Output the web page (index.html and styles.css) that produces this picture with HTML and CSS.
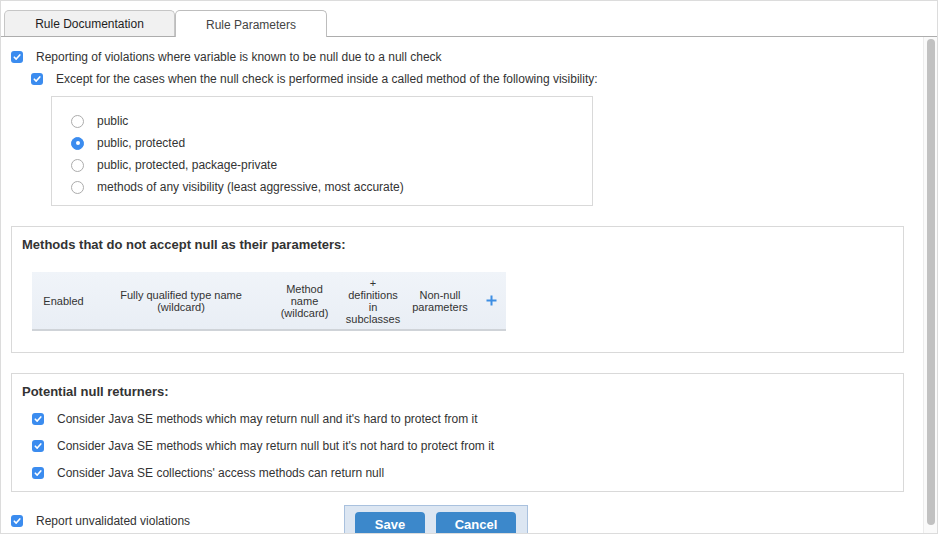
FILE: index.html
```html
<!DOCTYPE html>
<html>
<head>
<meta charset="utf-8">
<link rel="stylesheet" href="styles.css">
</head>
<body>
<div class="frame">
  <div class="tabbar">
    <div class="tab">Rule Documentation</div>
    <div class="tab active">Rule Parameters</div>
  </div>
  <div class="main">
    <div class="content">
      <div class="row">
        <span class="cb"><svg viewBox="0 0 12 12" width="12" height="12"><path d="M3.3 6.2 L5.2 8.1 L8.8 3.9" fill="none" stroke="#fff" stroke-width="1.6" stroke-linecap="round" stroke-linejoin="round"/></svg></span>
        <span class="label">Reporting of violations where variable is known to be null due to a null check</span>
      </div>
      <div class="row indent">
        <span class="cb"><svg viewBox="0 0 12 12" width="12" height="12"><path d="M3.3 6.2 L5.2 8.1 L8.8 3.9" fill="none" stroke="#fff" stroke-width="1.6" stroke-linecap="round" stroke-linejoin="round"/></svg></span>
        <span class="label">Except for the cases when the null check is performed inside a called method of the following visibility:</span>
      </div>
      <div class="radiobox">
        <div class="rrow"><span class="radio"></span><span class="label">public</span></div>
        <div class="rrow"><span class="radio on"></span><span class="label">public, protected</span></div>
        <div class="rrow"><span class="radio"></span><span class="label">public, protected, package-private</span></div>
        <div class="rrow"><span class="radio"></span><span class="label">methods of any visibility (least aggressive, most accurate)</span></div>
      </div>

      <div class="section">
        <div class="stitle">Methods that do not accept null as their parameters:</div>
        <table class="grid">
          <colgroup>
            <col class="c1"><col class="c2"><col class="c3"><col class="c4"><col class="c5"><col class="c6">
          </colgroup>
          <thead>
            <tr>
              <th>Enabled</th>
              <th>Fully qualified type name<br>(wildcard)</th>
              <th>Method<br>name<br>(wildcard)</th>
              <th>+<br>definitions<br>in<br>subclasses</th>
              <th>Non-null<br>parameters</th>
              <th><svg class="plus" viewBox="0 0 11 11" width="11" height="11"><path d="M5.5 0.5 V10.5 M0.5 5.5 H10.5" stroke="#3d8ee3" stroke-width="2"/></svg></th>
            </tr>
          </thead>
        </table>
      </div>

      <div class="section s3">
        <div class="stitle">Potential null returners:</div>
        <div class="list">
          <div class="crow">
            <span class="cb"><svg viewBox="0 0 12 12" width="12" height="12"><path d="M3.3 6.2 L5.2 8.1 L8.8 3.9" fill="none" stroke="#fff" stroke-width="1.6" stroke-linecap="round" stroke-linejoin="round"/></svg></span>
            <span class="label">Consider Java SE methods which may return null and it's hard to protect from it</span>
          </div>
          <div class="crow">
            <span class="cb"><svg viewBox="0 0 12 12" width="12" height="12"><path d="M3.3 6.2 L5.2 8.1 L8.8 3.9" fill="none" stroke="#fff" stroke-width="1.6" stroke-linecap="round" stroke-linejoin="round"/></svg></span>
            <span class="label">Consider Java SE methods which may return null but it's not hard to protect from it</span>
          </div>
          <div class="crow">
            <span class="cb"><svg viewBox="0 0 12 12" width="12" height="12"><path d="M3.3 6.2 L5.2 8.1 L8.8 3.9" fill="none" stroke="#fff" stroke-width="1.6" stroke-linecap="round" stroke-linejoin="round"/></svg></span>
            <span class="label">Consider Java SE collections' access methods can return null</span>
          </div>
        </div>
      </div>

      <div class="row last">
        <span class="cb"><svg viewBox="0 0 12 12" width="12" height="12"><path d="M3.3 6.2 L5.2 8.1 L8.8 3.9" fill="none" stroke="#fff" stroke-width="1.6" stroke-linecap="round" stroke-linejoin="round"/></svg></span>
        <span class="label">Report unvalidated violations</span>
      </div>
    </div>
    <div class="scrollbar"><div class="thumb"></div></div>
  </div>
  <div class="buttonbar">
    <button class="btn">Save</button>
    <button class="btn">Cancel</button>
  </div>
</div>
</body>
</html>
```

FILE: styles.css
```css
* { box-sizing: border-box; }
html, body { margin: 0; padding: 0; background: #fff; }
body {
  font-family: "Liberation Sans", Arial, sans-serif;
  font-size: 12px;
  color: #333;
  overflow: hidden;
}
.frame {
  position: relative;
  width: 938px;
  height: 534px;
  border: 1px solid #dcdcdc;
  display: flex;
  flex-direction: column;
  overflow: hidden;
}
.tabbar {
  display: flex;
  padding: 9px 0 0 3px;
  border-bottom: 1px solid #adadad;
  height: 36px;
  flex: none;
}
.tab {
  height: 26px;
  width: 171px;
  border: 1px solid #c6c6c6;
  border-bottom: none;
  border-radius: 5px 5px 0 0;
  background: #f1f1f1;
  color: #1e1e1e;
  font-size: 12px;
  display: flex;
  align-items: center;
  justify-content: center;
  padding-top: 1px;
}
.tab.active {
  width: 152px;
  margin-left: 0;
  height: 27px;
  margin-bottom: -1px;
  background: #fff;
  color: #444;
  border-color: #bdbdbd;
}
.main {
  flex: 1;
  display: flex;
  min-height: 0;
}
.content {
  flex: 1;
  padding: 9px 19px 0 10px;
  overflow: hidden;
}
.scrollbar {
  width: 14px;
  flex: none;
  background: #fafafa;
  border-left: 1px solid #ececec;
  padding: 2px 0 0 3px;
}
.thumb {
  width: 8px;
  height: 486px;
  background: #c1c1c1;
  border-radius: 4px;
}
.row {
  height: 22px;
  display: flex;
  align-items: center;
}
.row.indent { padding-left: 20px; }
.row.last { margin-top: 18px; }
.cb {
  width: 12px;
  height: 12px;
  border-radius: 3px;
  background: #3b8cef;
  flex: none;
  display: block;
  margin-right: 13px;
}
.cb svg { display: block; }
.label { white-space: nowrap; line-height: 14px; }
.radiobox {
  margin: 6px 0 0 40px;
  width: 542px;
  border: 1px solid #d9d9d9;
  padding: 13px 0 7px 19px;
}
.rrow {
  height: 22px;
  display: flex;
  align-items: center;
}
.radio {
  width: 13px;
  height: 13px;
  border-radius: 50%;
  border: 1px solid #acacac;
  background: #fff;
  flex: none;
  margin-right: 13px;
  display: flex;
  align-items: center;
  justify-content: center;
}
.radio.on {
  background: #3b8cef;
  border-color: #3b8cef;
}
.radio.on::after {
  content: "";
  width: 4px;
  height: 4px;
  border-radius: 50%;
  background: #fff;
}
.section {
  margin-top: 20px;
  border: 1px solid #d9d9d9;
  padding: 10px 10px 21px 10px;
}
.stitle {
  font-weight: bold;
  font-size: 13px;
  line-height: 16px;
  color: #333;
}
.grid {
  margin: 19px 0 0 10px;
  width: 474px;
  table-layout: fixed;
  border-collapse: collapse;
}
.grid .c1 { width: 63px; }
.grid .c2 { width: 172px; }
.grid .c3 { width: 75px; }
.grid .c4 { width: 62px; }
.grid .c5 { width: 72px; }
.grid .c6 { width: 30px; }
.grid th {
  height: 58px;
  padding: 0;
  font-weight: normal;
  font-size: 11px;
  line-height: 12px;
  color: #333;
  text-align: center;
  vertical-align: middle;
  background: linear-gradient(#f0f4f9, #e9eef5);
  border-bottom: 2px solid #cfd3d8;
}
.plus { display: block; margin: 0 auto 0 10px; }
.s3 { padding: 10px 10px 5px 10px; }
.list { margin-top: 5px; padding-left: 10px; }
.crow {
  height: 27px;
  display: flex;
  align-items: center;
}
.buttonbar {
  position: absolute;
  left: 343px;
  top: 504px;
  width: 184px;
  height: 40px;
  background: #dce6f2;
  border: 1px solid #a9c1de;
  display: flex;
  gap: 11px;
  padding: 6px 0 0 10px;
}
.btn {
  width: 70px;
  height: 24px;
  border: none;
  border-radius: 4px;
  background: #3c88cb;
  color: #fff;
  font-family: "Liberation Sans", Arial, sans-serif;
  font-weight: bold;
  font-size: 13px;
  padding: 0;
}
.btn + .btn { width: 80px; }
```
